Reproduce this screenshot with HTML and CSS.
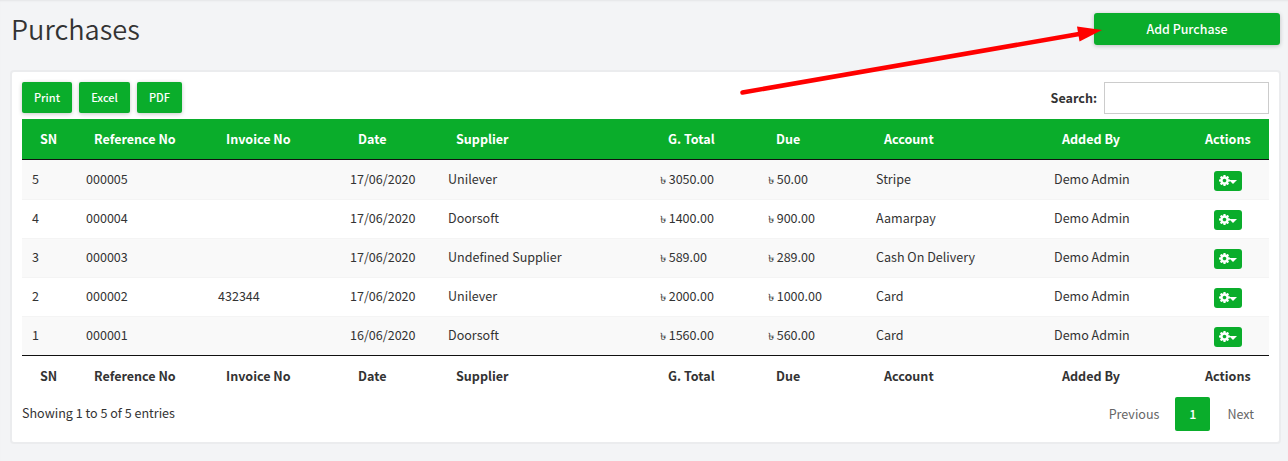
FILE: index.html
```
<!DOCTYPE html>
<html lang="en">
<head>
<meta charset="utf-8">
<title>Purchases</title>
<link rel="stylesheet" href="styles.css">
</head>
<body>
<svg class="symbols" width="0" height="0">
  <symbol id="cog" viewBox="0 0 1536 1536"><path d="M1024 768q0-106-75-181t-181-75-181 75-75 181 75 181 181 75 181-75 75-181zm512-109v222q0 12-8 23t-20 13l-185 28q-19 54-39 91 35 50 107 138 10 12 10 25t-9 23q-27 37-99 108t-94 71q-12 0-26-9l-138-108q-44 23-91 38-16 136-29 186-7 28-36 28H657q-14 0-24.500-8.500T621 1506l-28-184q-49-16-90-37l-141 107q-10 9-25 9-14 0-25-11-126-114-165-168-7-10-7-23 0-12 8-23 15-21 51-66.500t54-70.500q-27-50-41-99L29 913q-13-2-21-12.500T0 877V655q0-12 8-23t19-13l186-28q14-46 39-92-40-57-107-138-10-12-10-24 0-10 9-23 26-36 98.500-107.500T337 135q13 0 26 10l138 107q44-23 91-38 16-136 29-186 7-28 36-28h222q14 0 24.500 8.500T915 30l28 184q49 16 90 37l142-107q9-9 24-9 13 0 25 10 129 119 165 170 7 8 7 22 0 12-8 23-15 21-51 66.500t-54 70.500q26 50 41 98l183 28q13 2 21 12.500t8 23.500z"/></symbol>
</svg>
<header class="page-head">
  <h1>Purchases</h1>
  <button class="btn btn-add">Add Purchase</button>
</header>
<main class="box">
  <div class="toolbar">
    <div class="exports">
      <button class="btn print">Print</button>
      <button class="btn excel">Excel</button>
      <button class="btn pdf">PDF</button>
    </div>
    <label class="search">Search:<input type="text"></label>
  </div>
  <table>
    <colgroup><col class="c-sn"><col class="c-ref"><col class="c-inv"><col class="c-date"><col class="c-sup"><col class="c-total"><col class="c-due"><col class="c-acc"><col class="c-by"><col class="c-act"></colgroup>
    <thead><tr><th>SN</th><th>Reference No</th><th>Invoice No</th><th>Date</th><th>Supplier</th><th>G. Total</th><th>Due</th><th>Account</th><th>Added By</th><th>Actions</th></tr></thead>
    <tbody>
      <tr><td>5</td><td>000005</td><td></td><td>17/06/2020</td><td>Unilever</td><td><span class="cur">৳</span>3050.00</td><td><span class="cur">৳</span>50.00</td><td>Stripe</td><td>Demo Admin</td><td class="act"><button class="gear"><svg class="cog"><use href="#cog"/></svg><i class="caret"></i></button></td></tr>
      <tr><td>4</td><td>000004</td><td></td><td>17/06/2020</td><td>Doorsoft</td><td><span class="cur">৳</span>1400.00</td><td><span class="cur">৳</span>900.00</td><td>Aamarpay</td><td>Demo Admin</td><td class="act"><button class="gear"><svg class="cog"><use href="#cog"/></svg><i class="caret"></i></button></td></tr>
      <tr><td>3</td><td>000003</td><td></td><td>17/06/2020</td><td>Undefined Supplier</td><td><span class="cur">৳</span>589.00</td><td><span class="cur">৳</span>289.00</td><td>Cash On Delivery</td><td>Demo Admin</td><td class="act"><button class="gear"><svg class="cog"><use href="#cog"/></svg><i class="caret"></i></button></td></tr>
      <tr><td>2</td><td>000002</td><td>432344</td><td>17/06/2020</td><td>Unilever</td><td><span class="cur">৳</span>2000.00</td><td><span class="cur">৳</span>1000.00</td><td>Card</td><td>Demo Admin</td><td class="act"><button class="gear"><svg class="cog"><use href="#cog"/></svg><i class="caret"></i></button></td></tr>
      <tr><td>1</td><td>000001</td><td></td><td>16/06/2020</td><td>Doorsoft</td><td><span class="cur">৳</span>1560.00</td><td><span class="cur">৳</span>560.00</td><td>Card</td><td>Demo Admin</td><td class="act"><button class="gear"><svg class="cog"><use href="#cog"/></svg><i class="caret"></i></button></td></tr>
    </tbody>
    <tfoot><tr><th>SN</th><th>Reference No</th><th>Invoice No</th><th>Date</th><th>Supplier</th><th>G. Total</th><th>Due</th><th>Account</th><th>Added By</th><th>Actions</th></tr></tfoot>
  </table>
  <div class="table-foot">
    <div class="info">Showing 1 to 5 of 5 entries</div>
    <nav class="pager"><a>Previous</a><a class="current">1</a><a>Next</a></nav>
  </div>
</main>
<svg class="arrow" width="370" height="80" viewBox="735 20 370 80">
  <line x1="742.500" y1="92.500" x2="1082" y2="33.500"/>
  <path d="M1102 30 L1077 26.500 L1079.500 41.500 Z"/>
</svg>
</body>
</html>
```
FILE: styles.css
```
* { box-sizing: border-box; }
body {
  margin: 0;
  height: 461px;
  overflow: hidden;
  background: #f3f4f6;
  box-shadow: inset 0 2px 2px -1px #e4e5e7;
  color: #333;
  font-family: "Noto Sans CJK SC", "Noto Sans", sans-serif;
  font-size: 12.56px;
  line-height: 20px;
}
.symbols { display: block; }
.page-head {
  display: flex;
  justify-content: space-between;
  align-items: flex-start;
  height: 70px;
  padding: 13px 8px 0 11px;
}
h1 { margin: -2px 0 0; font-size: 27.2px; font-weight: 350; line-height: 34px; }
.btn, .gear {
  border: 0;
  border-radius: 2px;
  background: #0aad2b;
  color: #fff;
  font-family: inherit;
  padding: 0;
}
.btn { box-shadow: 0 1px 4px rgba(0, 0, 0, .22); }
.btn-add { width: 186px; height: 32px; font-size: 12.4px; font-weight: 500; border-radius: 3px; }
.box {
  margin: 0 7px 0 10px;
  height: 374px;
  padding: 10px;
  background: #fff;
  border: 2px solid #ebecee;
  border-radius: 4px;
}
.toolbar { display: flex; justify-content: space-between; height: 37px; }
.exports { display: flex; gap: 7px; }
.exports .btn { height: 31px; padding-bottom: 1px; font-size: 11px; font-weight: 500; }
.print { width: 50px; }
.excel { width: 51px; }
.pdf { width: 45px; }
.search { display: flex; align-items: center; gap: 7px; height: 32px; font-weight: 700; }
.search input { width: 165px; height: 32px; border: 1px solid #ccc; background: #fff; padding: 0; }
table { width: 1247px; table-layout: fixed; border-collapse: separate; border-spacing: 0; }
.c-sn { width: 54px; }
.c-ref, .c-inv { width: 132px; }
.c-date { width: 98px; }
.c-sup { width: 212px; }
.c-total, .c-due { width: 108px; }
.c-acc { width: 178px; }
.c-by { width: 143px; }
.c-act { width: 82px; }
th, td { text-align: left; white-space: nowrap; }
th { padding: 10px 0 10px 18px; font-weight: 700; }
thead th { background: #0aad2b; color: #fff; border-bottom: 1px solid #111; }
td { height: 39px; padding: 0 0 2px 10px; border-top: 1px solid #f4f4f4; }
tbody tr:first-child td { border-top-color: #f9f9f9; }
tbody tr:nth-child(odd) { background: #f9f9f9; }
tfoot th { border-top: 1px solid #111; }
.cur {
  display: inline-block;
  width: 5.200px;
  margin-right: 3.500px;
  font-size: 10px;
  line-height: 16px;
  transform: scaleX(1.300);
  transform-origin: left;
}
.act { padding-left: 27px; }
.gear {
  display: flex;
  align-items: center;
  width: 28px;
  height: 20px;
  margin-top: 4px;
  padding: 0 0 1px 5px;
  border-radius: 3px;
}
.cog { width: 11px; height: 11px; fill: #fff; }
.caret { border: 4px solid transparent; border-top-color: #fff; border-bottom: 0; margin: 2px 0 0 -1px; }
.table-foot { display: flex; justify-content: space-between; height: 35px; padding-top: 1px; }
.info { padding-top: 6px; }
.pager { display: flex; line-height: 34px; color: #666; padding-right: 15px; }
.current {
  width: 35px;
  margin: 0 17px 0 16px;
  border-radius: 2px;
  background: #0aad2b;
  color: #fff;
  text-align: center;
  font-weight: 500;
}
.arrow { position: absolute; left: 735px; top: 20px; pointer-events: none; }
.arrow line { stroke: #f00; stroke-width: 4.500; stroke-linecap: round; }
.arrow path { fill: #f00; }
```
